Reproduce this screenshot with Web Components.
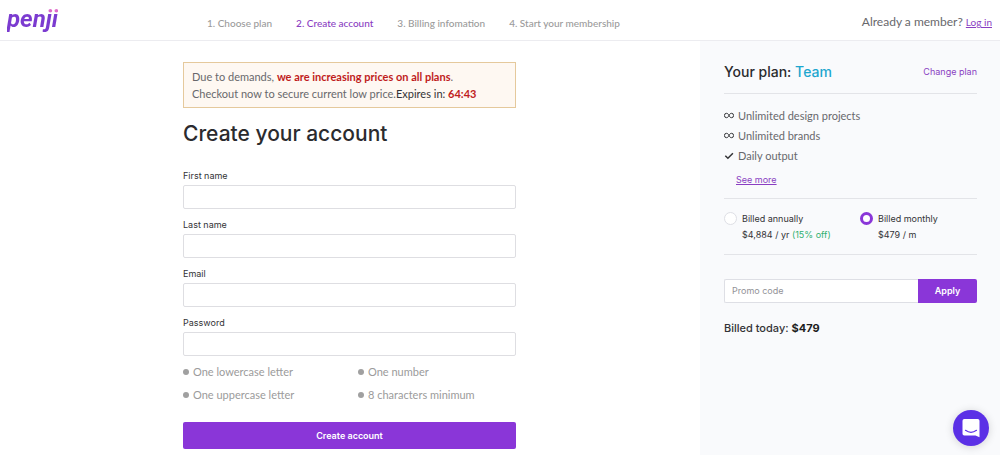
<!DOCTYPE html>
<html lang="en">
<head>
<meta charset="utf-8">
<meta name="viewport" content="width=device-width, initial-scale=1">
<title>Penji - Create account</title>
<style>
  :root {
    --purple: #8a36d8;
    --link: #8a3ec2;
    --ink: #333336;
    --text: #68686c;
    --muted: #9b9b9b;
    --line: #e3e4e8;
    --ui: Inter, "Liberation Sans", sans-serif;
    --copy: Lato, "Liberation Sans", sans-serif;
  }
  body { margin: 0; background: #fff; color: var(--text); font: 11px/17px var(--copy); }
</style>
</head>
<body>
<signup-page></signup-page>

<script>
const define = (name, html, setup) => {
  const template = document.createElement('template');
  template.innerHTML = `<style>
    *, *::before, *::after { box-sizing: border-box; }
    :host { display: block; }
    a { color: var(--link); }
    input, button { font: inherit; margin: 0; }
  </style>` + html;
  customElements.define(name, class extends HTMLElement {
    constructor() {
      super();
      this.attachShadow({ mode: 'open' }).append(template.content.cloneNode(true));
    }
    connectedCallback() { if (setup) setup(this, this.shadowRoot); }
  });
};

define('penji-logo', `
  <style>
    :host { padding-bottom: 3px; }
    a {
      display: inline-block;
      font: italic 700 24px/30px Roboto, sans-serif;
      text-decoration: none;
      color: transparent;
      background: linear-gradient(#e069c8 0 10px, #7b3bd0 10px);
      -webkit-background-clip: text;
      background-clip: text;
    }
  </style>
  <a href="#home">penji</a>`);

define('site-header', `
  <style>
    :host { border-bottom: 1px solid #ececf0; background: #fff; }
    header { display: flex; align-items: center; height: 40px; padding: 0 8px 0 7px; }
    penji-logo { flex: 0 0 200px; }
    ol { display: flex; gap: 24px; margin: 0; padding: 6px 0 0; list-style: none; font: 500 10px/16px var(--copy); color: var(--muted); }
    [aria-current] { color: var(--link); }
    p { margin: 4px 0 0 auto; font-size: 12px; }
    p a { font-size: 10px; }
  </style>
  <header>
    <penji-logo></penji-logo>
    <nav aria-label="Sign-up steps"><ol>
      <li>1. Choose plan</li>
      <li aria-current="step">2. Create account</li>
      <li>3. Billing infomation</li>
      <li>4. Start your membership</li>
    </ol></nav>
    <p>Already a member? <a href="#login">Log in</a></p>
  </header>`);

define('price-alert', `
  <style>
    :host { padding: 5px 8px; border: 1px solid #e5c99c; background: #fef8f2; }
    p { margin: 0; }
  </style>
  <p><slot></slot></p>`);

define('form-field', `
  <style>
    label { display: block; font: 9px/18px var(--ui); color: var(--ink); }
    input { display: block; width: 100%; height: 24px; padding: 0 8px; border: 1px solid #dedee2; border-radius: 2px; background: #fff; }
  </style>
  <label for="control"></label>
  <input id="control">`, (host, root) => {
  root.querySelector('label').textContent = host.getAttribute('label');
  root.querySelector('input').type = host.getAttribute('type') || 'text';
});

define('password-rules', `
  <style>
    ul { display: grid; grid-template-columns: 175px 1fr; gap: 5px 0; margin: 0; padding: 0; list-style: none; line-height: 18px; color: var(--muted); }
    li { display: flex; align-items: center; gap: 4px; }
    li::before { content: ""; width: 6px; height: 6px; border-radius: 50%; background: #a0a0a0; }
  </style>
  <ul>
    <li>One lowercase letter</li><li>One number</li>
    <li>One uppercase letter</li><li>8 characters minimum</li>
  </ul>`);

define('account-form', `
  <style>
    :host { width: 100%; max-width: 333px; }
    strong { font-weight: 700; color: #c01c1c; }
    b { font-weight: 400; color: var(--ink); }
    h1 { margin: 9px 0 16px; font: 500 21px/34px var(--ui); color: #2b2b2e; }
    form { display: grid; gap: 7px; }
    button { height: 27px; margin-top: 11px; border: 0; border-radius: 2px; background: var(--purple); color: #fff; font: 600 9px/16px var(--ui); }
  </style>
  <price-alert>Due to demands, <strong>we are increasing prices on all plans</strong>.<br>Checkout now to secure current low price.<b>Expires in: <strong>64:43</strong></b></price-alert>
  <h1>Create your account</h1>
  <form>
    <form-field label="First name"></form-field>
    <form-field label="Last name"></form-field>
    <form-field label="Email" type="email"></form-field>
    <form-field label="Password" type="password"></form-field>
    <password-rules></password-rules>
    <button type="submit">Create account</button>
  </form>`);

define('plan-feature', `
  <style>
    :host { display: flex; align-items: center; gap: 4px; line-height: 17px; }
    svg { width: 10px; height: 10px; fill: none; stroke: var(--ink); }
  </style>
  <svg viewBox="0 0 10 10" aria-hidden="true"><path></path></svg><span><slot></slot></span>`, (host, root) => {
  const check = host.getAttribute('icon') === 'check';
  const path = root.querySelector('path');
  path.setAttribute('d', check ? 'M1.3 4.8 3.9 7.3 8.9 2.2'
    : 'M5 4.5C4.4 3.3 3.7 2.3 2.6 2.3a2.1 2.1 0 0 0 0 4.4C3.7 6.7 4.4 5.7 5 4.5S6.3 2.3 7.4 2.3a2.1 2.1 0 0 1 0 4.4C6.3 6.7 5.6 5.7 5 4.5Z');
  path.setAttribute('stroke-width', check ? '1.5' : '1');
});

define('billing-choice', `
  <style>
    fieldset { display: grid; grid-template-columns: 136px 1fr; margin: 0; padding: 12px 0 11px; border: 0; font: 9px/16px var(--ui); color: var(--ink); }
    label { display: flex; align-items: flex-start; gap: 5px; }
    input { appearance: none; flex: none; width: 13px; height: 13px; margin-top: 1px; border: 1px solid #dedfe5; border-radius: 50%; background: #fff; }
    input:checked { border: 3px solid var(--purple); }
    em { font-style: normal; color: #2fb070; }
  </style>
  <fieldset aria-label="Billing period">
    <label><input type="radio" name="billing"><span>Billed annually<br>$4,884 / yr <em>(15% off)</em></span></label>
    <label><input type="radio" name="billing" checked><span>Billed monthly<br>$479 / m</span></label>
  </fieldset>`);

define('promo-code', `
  <style>
    form { display: flex; height: 24px; }
    input { flex: 1; min-width: 0; padding: 0 7px; border: 1px solid #dedfe5; border-right: 0; border-radius: 2px 0 0 2px; background: #fff; font: 9px/16px var(--ui); }
    input::placeholder { color: #929297; }
    button { width: 59px; padding: 0; border: 0; border-radius: 0 2px 2px 0; background: var(--purple); color: #fff; font: 600 9px/16px var(--ui); }
  </style>
  <form><input type="text" aria-label="Promo code" placeholder="Promo code"><button type="submit">Apply</button></form>`);

define('plan-summary', `
  <style>
    :host { padding: 19px 23px 24px 24px; background: #f9fafc; }
    .head { display: flex; align-items: center; justify-content: space-between; height: 34px; border-bottom: 1px solid var(--line); padding-bottom: 10px; }
    h2 { margin: 0; font: 500 14px/24px var(--ui); color: #2b2b2e; }
    h2 span { color: #1ea7cf; }
    .head a { font: 9px/16px var(--ui); text-decoration: none; }
    .features { display: grid; gap: 3px; padding: 13px 0 10px; border-bottom: 1px solid var(--line); }
    .features a { justify-self: start; margin: 5px 0 0 12px; font: 9px/16px var(--ui); }
    billing-choice { border-bottom: 1px solid var(--line); }
    promo-code { margin-top: 24px; }
    p { margin: 16px 0 0; font: 500 11px/18px var(--ui); color: var(--ink); }
    p b { font-weight: 700; color: #1d1d20; }
  </style>
  <div class="head"><h2>Your plan: <span>Team</span></h2><a href="#plans">Change plan</a></div>
  <div class="features">
    <plan-feature icon="infinity">Unlimited design projects</plan-feature>
    <plan-feature icon="infinity">Unlimited brands</plan-feature>
    <plan-feature icon="check">Daily output</plan-feature>
    <a href="#features">See more</a>
  </div>
  <billing-choice></billing-choice>
  <promo-code></promo-code>
  <p>Billed today: <b>$479</b></p>`);

define('chat-launcher', `
  <style>
    :host { position: fixed; right: 11px; bottom: 9px; }
    button { display: grid; place-items: center; width: 36px; height: 36px; padding: 0; border: 0; border-radius: 50%; background: #5b30e6; box-shadow: 0 1px 8px rgba(0, 0, 0, .16); }
    svg { width: 18px; height: 20px; }
  </style>
  <button type="button" aria-label="Open chat">
    <svg viewBox="0 0 18 20" aria-hidden="true">
      <path fill="#fff" d="M2.3 1h13.4A1.8 1.8 0 0 1 17.5 2.8V19.3L13.5 17.5H2.3A1.8 1.8 0 0 1 .5 15.7V2.8A1.8 1.8 0 0 1 2.3 1Z"/>
      <path fill="none" stroke="#5b30e6" stroke-width="1.2" stroke-linecap="round" d="M3.5 12.3Q9 16.3 14.5 12.3"/>
    </svg>
  </button>`);

define('signup-page', `
  <style>
    :host { display: flex; flex-direction: column; min-height: 100vh; }
    .columns { flex: 1; display: grid; grid-template-columns: 7fr 3fr; }
    main { display: flex; justify-content: center; padding: 21px 25px 6px 24px; }
  </style>
  <site-header></site-header>
  <div class="columns">
    <main><account-form></account-form></main>
    <plan-summary role="complementary"></plan-summary>
  </div>
  <chat-launcher></chat-launcher>`);
</script>
</body>
</html>
